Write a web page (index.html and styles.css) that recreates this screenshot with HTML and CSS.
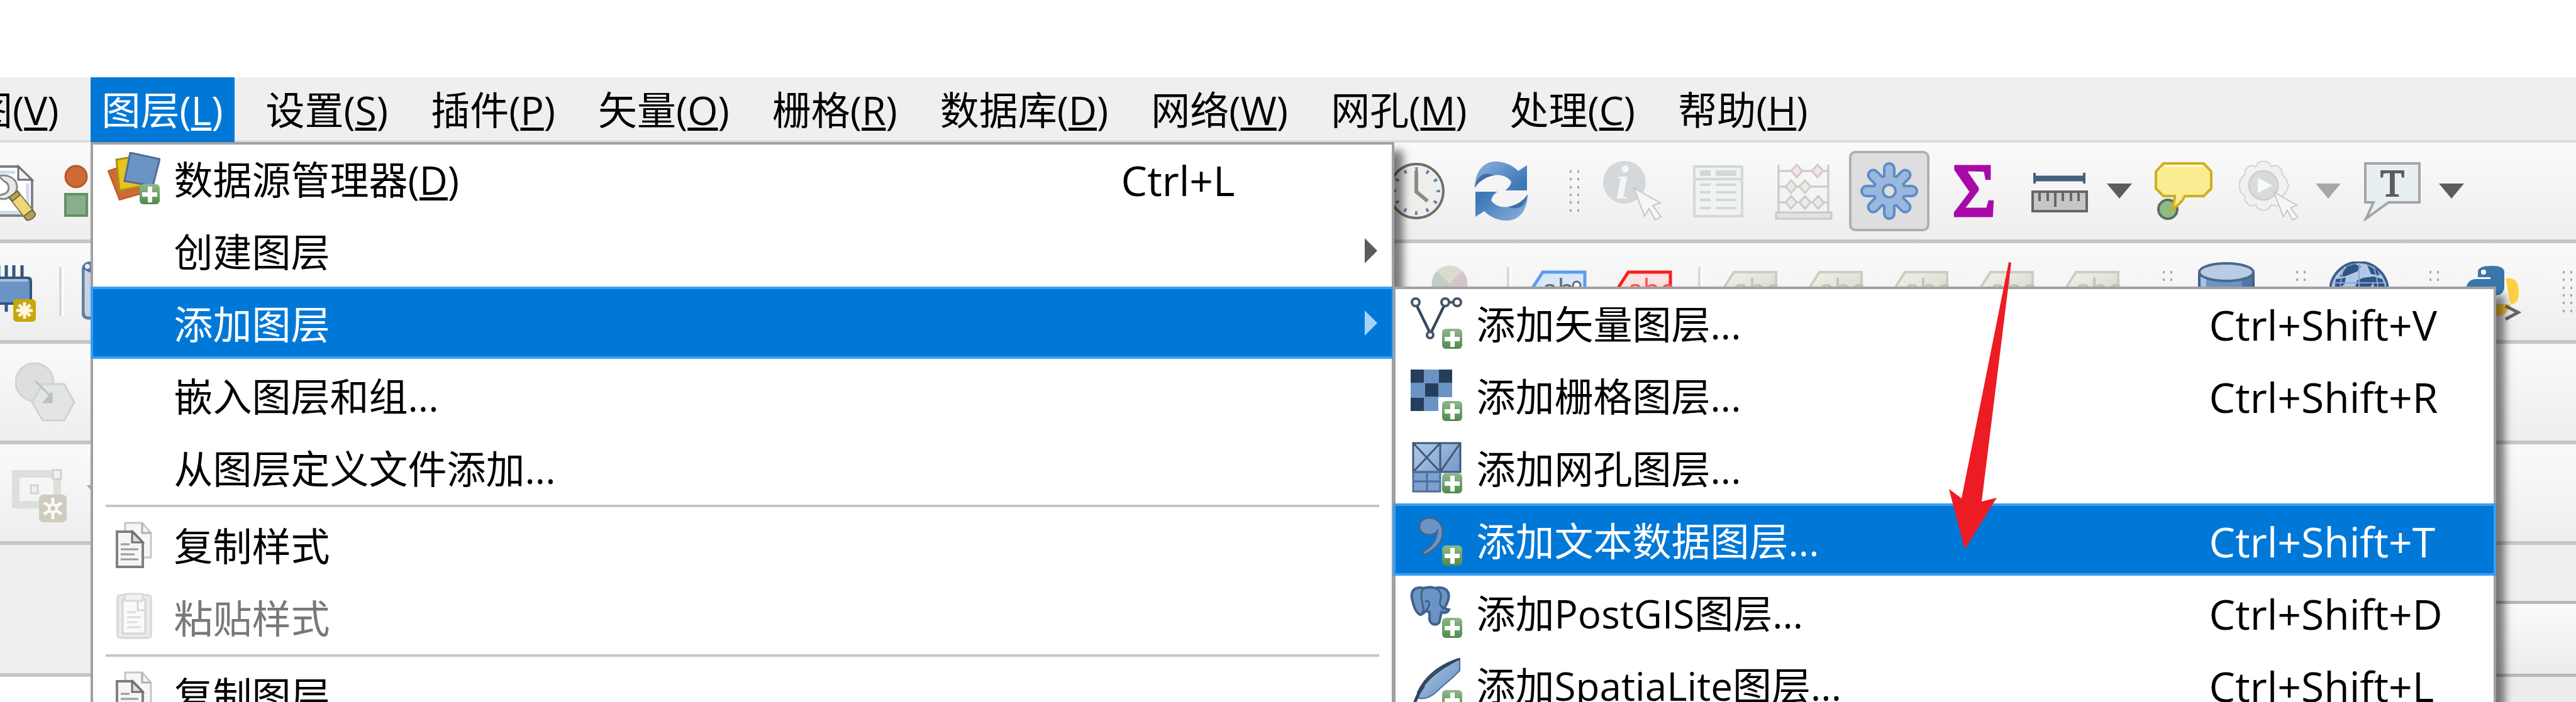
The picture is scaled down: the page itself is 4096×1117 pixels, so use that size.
FILE: index.html
```html
<!DOCTYPE html>
<html lang="zh-CN">
<head>
<meta charset="utf-8">
<title>QGIS</title>
<link rel="stylesheet" href="styles.css">
</head>
<body>
<svg class="defs" aria-hidden="true">
  <defs>
    <linearGradient id="g-plus" x1="0" y1="0" x2="0" y2="1"><stop offset="0" stop-color="#8fb98c"/><stop offset="1" stop-color="#4f8a4c"/></linearGradient>
    <linearGradient id="g-arrow" x1="0" y1="0" x2="1" y2="0.6"><stop offset="0" stop-color="#8fb4de"/><stop offset="1" stop-color="#3d78b8"/></linearGradient>
    <linearGradient id="g-blue" x1="0" y1="0" x2="1" y2="1"><stop offset="0" stop-color="#b6cbe6"/><stop offset="1" stop-color="#5f8cc0"/></linearGradient>
    <linearGradient id="g-tag" x1="0" y1="0" x2="1" y2="1"><stop offset="0" stop-color="#f2f2ea"/><stop offset="1" stop-color="#d4d4c8"/></linearGradient>
    <symbol id="plus" viewBox="0 0 34 34">
      <rect x="1" y="1" width="32" height="32" rx="6" fill="url(#g-plus)"/>
      <path d="M14 5h7v9h8v7h-8v9h-7v-9H5v-7h9z" fill="#fff"/>
    </symbol>
    <symbol id="grip" viewBox="0 0 18 68">
      <g fill="#a8a8a8"><path d="M1 1h3v4H1zM1 13h3v4H1zM1 26h3v4H1zM1 38h3v4H1zM1 50h3v4H1zM1 63h3v4H1zM13 1h3v4h-3zM13 13h3v4h-3zM13 26h3v4h-3zM13 38h3v4h-3zM13 50h3v4h-3zM13 63h3v4h-3z"/></g>
    </symbol>
    <symbol id="tag" viewBox="0 0 96 96">
      <path d="M5 42 21 17h67v54H21z" fill="url(#g-tag)" stroke="#cfccbf" stroke-width="4"/>
      <text x="20" y="60" font-size="44" fill="#c2c2b8">abc</text>
    </symbol>
    <symbol id="copy" viewBox="0 0 84 84">
      <path d="M28 7h27l14 16v39H28z" fill="#f6f6f6" stroke="#c6c6c6" stroke-width="3"/>
      <path d="M55 7v16h14" fill="none" stroke="#b0b0b0" stroke-width="3"/>
      <path d="M15 21h25l16 17v39H15z" fill="#f6f6f6" stroke="#808080" stroke-width="4"/>
      <path d="M39 21v17h17z" fill="#ddd" stroke="#707070" stroke-width="3"/>
      <path d="M21 41h14M21 49h28M21 57h22M21 65h28" stroke="#9a9a9a" stroke-width="3"/>
    </symbol>
    <symbol id="cursor" viewBox="0 0 48 56">
      <path d="M2 2 44 26 32 30 45 48 36 53 26 35 19 47z" fill="#f6f6f6" stroke="#c4c4c4" stroke-width="2"/>
    </symbol>
  </defs>
</svg>

<div class="window">
  <header class="menubar">
    <ul class="menubar-list">
      <li><button class="menubar-item">视图(<u>V</u>)</button></li>
      <li class="open"><button class="menubar-item active">图层(<u>L</u>)</button>
        <ul class="menu menu-layer">
          <li><button class="item">
            <svg class="item-icon" viewBox="0 0 84 84"><path d="M1 30 36 18 54 66 19 76z" fill="#d06a34" stroke="#b85a2c" stroke-width="2"/><path d="M14 12 50 6 56 54 19 61z" fill="#e8c31c" stroke="#a89016" stroke-width="3"/><path d="M36 1 83 11 72 54 27 46z" fill="#6b94c4" stroke="#4d6f98" stroke-width="3"/><use href="#plus" x="50" y="50" width="34" height="34"/></svg>
            <span class="label">数据源管理器(<u>D</u>)</span><span class="shortcut">Ctrl+L</span></button></li>
          <li><button class="item"><span class="item-icon"></span><span class="label">创建图层</span><svg class="chevron" viewBox="0 0 20 40"><path d="M0 0 20 20 0 40z"/></svg></button></li>
          <li class="open"><button class="item active"><span class="item-icon"></span><span class="label">添加图层</span><svg class="chevron" viewBox="0 0 20 40"><path d="M0 0 20 20 0 40z"/></svg></button>
            <ul class="menu menu-add">
              <li><button class="item">
                <svg class="item-icon" viewBox="0 0 84 84"><g fill="none" stroke="#44566c" stroke-width="4"><path d="M11 15 31 56M54 15 34 56M61 9h8"/><path d="M11 15 31 56M54 15 34 56" stroke="#33475c"/><circle cx="9" cy="9" r="6"/><circle cx="56" cy="9" r="6"/><circle cx="75" cy="9" r="6"/><circle cx="32" cy="61" r="5"/></g><use href="#plus" x="50" y="50" width="34" height="34"/></svg>
                <span class="label">添加矢量图层...</span><span class="shortcut">Ctrl+Shift+V</span></button></li>
              <li><button class="item">
                <svg class="item-icon" viewBox="0 0 84 84"><path d="M1 1h66v44H45v22H1z" fill="#6b94c4"/><path d="M1 1h21v21H1zM46 1h21v21H46zM24 23h21v21H24zM1 46h21v21H1z" fill="#263e5e"/><use href="#plus" x="50" y="50" width="34" height="34"/></svg>
                <span class="label">添加栅格图层...</span><span class="shortcut">Ctrl+Shift+R</span></button></li>
              <li><button class="item">
                <svg class="item-icon" viewBox="0 0 84 84"><path d="M5 3h76v46H49v32H5z" fill="url(#g-blue)"/><path d="M5 49h44v32H5z" fill="#7da1cf"/><path d="M5 3h75v46H5zM48 3v46M5 3l43 46M48 3 5 49M80 3 48 49" fill="none" stroke="#3f5878" stroke-width="3"/><path d="M5 49h43v31H5zM27 49v31M5 64h43" fill="none" stroke="#4c6f9e" stroke-width="3"/><use href="#plus" x="50" y="50" width="34" height="34"/></svg>
                <span class="label">添加网孔图层...</span><span class="shortcut"></span></button></li>
              <li><button class="item active">
                <svg class="item-icon" viewBox="0 0 84 84"><path d="M31 7C43 7 52 16 52 30 52 48 38 59 23 66L20 61C32 54 42 45 43 29 40 33 35 34 30 34 21 34 15 29 15 21 15 12 22 7 31 7z" fill="#6b94c4" stroke="#44648e" stroke-width="3"/><use href="#plus" x="50" y="50" width="34" height="34"/></svg>
                <span class="label">添加文本数据图层...</span><span class="shortcut">Ctrl+Shift+T</span></button></li>
              <li><button class="item">
                <svg class="item-icon" viewBox="0 0 84 84"><g fill="#6b94c4" stroke="#3f628c" stroke-width="4"><path d="M22 4C8 0 1 8 3 20 5 32 10 44 16 46 20 46 22 43 25 40L31 42 31 54C33 64 46 64 47 56L50 42C56 44 60 42 62 38L54 36C60 28 63 18 61 12 58 2 46 2 40 4 34 1 28 2 22 4z"/><path d="M21 5C16 12 18 22 20 30 22 36 22 38 19 44M43 5C50 10 50 18 48 24 46 30 50 34 54 37M24 26C28 22 32 26 30 32 29 36 27 38 25 40" fill="none" stroke-width="3"/></g><use href="#plus" x="50" y="50" width="34" height="34"/></svg>
                <span class="label">添加PostGIS图层...</span><span class="shortcut">Ctrl+Shift+D</span></button></li>
              <li><button class="item">
                <svg class="item-icon" viewBox="0 0 84 84"><path d="M79 1C50 10 22 30 12 58L14 64C24 66 34 62 44 52 54 42 66 34 79 20z" fill="url(#g-blue)" stroke="#4d6f98" stroke-width="2"/><path d="M79 1C50 10 24 28 12 56L20 46C34 26 54 14 79 1z" fill="#6b94c4" stroke="#33475c" stroke-width="3"/><path d="M22 44C14 54 8 66 4 84" fill="none" stroke="#33475c" stroke-width="5"/><use href="#plus" x="50" y="50" width="34" height="34"/></svg>
                <span class="label">添加SpatiaLite图层...</span><span class="shortcut">Ctrl+Shift+L</span></button></li>
            </ul>
          </li>
          <li><button class="item"><span class="item-icon"></span><span class="label">嵌入图层和组...</span></button></li>
          <li><button class="item"><span class="item-icon"></span><span class="label">从图层定义文件添加...</span></button></li>
          <li class="separator"></li>
          <li><button class="item"><svg class="item-icon"><use href="#copy"/></svg><span class="label">复制样式</span></button></li>
          <li><button class="item" disabled>
            <svg class="item-icon" viewBox="0 0 84 84"><rect x="16" y="7" width="53" height="68" rx="5" fill="#ecebe8" stroke="#dedcd8" stroke-width="4"/><path d="M24 14h36v54H24z" fill="#fafafa" stroke="#d6d6d6" stroke-width="3"/><path d="M28 5h28v11H28z" fill="#f2f2f2" stroke="#dadada" stroke-width="3"/><path d="M48 17v14h12" fill="none" stroke="#d6d6d6" stroke-width="3"/><path d="M31 34h14M31 42h22M31 50h16M31 58h22" stroke="#dcdcdc" stroke-width="3"/></svg>
            <span class="label">粘贴样式</span></button></li>
          <li class="separator"></li>
          <li><button class="item"><svg class="item-icon"><use href="#copy"/></svg><span class="label">复制图层</span></button></li>
        </ul>
      </li>
      <li><button class="menubar-item">设置(<u>S</u>)</button></li>
      <li><button class="menubar-item">插件(<u>P</u>)</button></li>
      <li><button class="menubar-item">矢量(<u>O</u>)</button></li>
      <li><button class="menubar-item">栅格(<u>R</u>)</button></li>
      <li><button class="menubar-item">数据库(<u>D</u>)</button></li>
      <li><button class="menubar-item">网络(<u>W</u>)</button></li>
      <li><button class="menubar-item">网孔(<u>M</u>)</button></li>
      <li><button class="menubar-item">处理(<u>C</u>)</button></li>
      <li><button class="menubar-item">帮助(<u>H</u>)</button></li>
    </ul>
  </header>

  <div class="toolbar">
    <div class="group-left scrolled">
      <button class="tool" aria-label="样式面板"><svg viewBox="0 0 96 96"><path d="M6 9h61l22 22v56H6z" fill="#fff" stroke="#808080" stroke-width="4"/><path d="M12 18h50M82 36v46H12" fill="none" stroke="#cdd9f6" stroke-width="5"/><path d="M67 9v21h22z" fill="#f2f2f2" stroke="#707070" stroke-width="3"/><path d="M36 24C50 20 64 28 65 40 66 48 60 54 56 56L48 60C42 62 36 60 34 56L46 52C54 48 54 36 44 32z" fill="#e8eaea" stroke="#8a8a8a" stroke-width="3"/><path d="M52 58 66 48 93 82C95 88 86 96 80 94z" fill="#ecd879" stroke="#8a7c40" stroke-width="2"/><path d="M52 58 66 48 70 54 58 64zM80 94 76 88 89 78 94 84C95 88 87 96 80 94z" fill="#b0a25a" stroke="#746a3c" stroke-width="2"/></svg></button>
      <button class="tool" aria-label="样式"><svg viewBox="0 0 96 96"><circle cx="23" cy="25" r="17" fill="#d06a34" stroke="#b4562a" stroke-width="3"/><path d="M6 53h34v34H6z" fill="#8aad8b" stroke="#619361" stroke-width="4"/></svg></button>
    </div>
    <div class="group-right">
      <button class="tool" aria-label="时态控制器"><svg viewBox="0 0 96 96"><circle cx="48" cy="48" r="43" fill="#eeeeec" stroke="#6e6e6a" stroke-width="4"/><circle cx="48" cy="48" r="35" fill="none" stroke="#5c86b8" stroke-width="6" stroke-dasharray="4 14.33" stroke-dashoffset="2"/><path d="M48 16v33l18 15" fill="none" stroke="#8c8c86" stroke-width="6"/></svg></button>
      <button class="tool" aria-label="刷新"><svg viewBox="0 0 96 96"><g id="half"><path d="M5 43C5 18 18 1 38 1 54 1 66 8 74 16L88 7V47H53C60 42 62 38 63 33 58 26 48 21 36 23 22 25 10 34 5 43z" fill="url(#g-arrow)"/><path d="M5 43C8 24 20 16 36 23 22 25 10 34 5 43z" fill="#3f6ea8"/></g><use href="#half" transform="rotate(180 47 48)"/></svg></button>
      <span class="grip"><svg><use href="#grip"/></svg></span>
      <button class="tool" aria-label="识别要素" disabled><svg viewBox="0 0 96 96"><circle cx="35" cy="34" r="34" fill="#d5d8db"/><text x="21" y="60" font-size="76" font-weight="700" font-style="italic" class="serif" fill="#f4f4f4">i</text><use href="#cursor" x="48" y="41" width="48" height="56"/></svg></button>
      <button class="tool" aria-label="打开属性表" disabled><svg viewBox="0 0 96 96"><path d="M10 9h76v79H10zM10 29h76" fill="#f1f2f2" stroke="#d3d8dc" stroke-width="4"/><path d="M19 15h17v9H19zM44 15h33v9H44z" fill="#d5d8db"/><path d="M19 38h17M44 38h33M19 50h17M44 50h33M19 62h17M44 62h33M19 75h17M44 75h33" stroke="#d3d7da" stroke-width="4"/></svg></button>
      <button class="tool" aria-label="字段计算器" disabled><svg viewBox="0 0 96 96"><g fill="none" stroke="#c8c8c8" stroke-width="3"><path d="M8 6v76M87 6v76M8 16h79M8 41h79M8 66h79"/><path d="M4 82h88v10H4z" fill="#e2e2e2"/><path d="m37 6 9 10-9 10-9-10zM70 6l9 10-9 10-9-10z" fill="#f1e4e4" stroke="#d8c8c8"/><path d="m28 31 9 10-9 10-9-10zM50 31l9 10-9 10-9-10z" fill="#e8ece6" stroke="#ccd0c8"/><path d="m28 56 9 10-9 10-9-10zM50 56l9 10-9 10-9-10zM71 56l9 10-9 10-9-10z" fill="#e8ecec" stroke="#c8cccc"/></g></svg></button>
      <button class="tool pressed" aria-label="工具箱"><svg viewBox="0 0 96 96"><g id="teeth" fill="#9bb8dc" stroke="#5b8ccb" stroke-width="6"><rect x="41" y="5" width="14" height="86" rx="7"/><rect x="41" y="5" width="14" height="86" rx="7" transform="rotate(45 48 48)"/><rect x="41" y="5" width="14" height="86" rx="7" transform="rotate(90 48 48)"/><rect x="41" y="5" width="14" height="86" rx="7" transform="rotate(135 48 48)"/><circle cx="48" cy="48" r="24"/></g><g fill="#9bb8dc"><rect x="42" y="6" width="12" height="84" rx="6"/><rect x="42" y="6" width="12" height="84" rx="6" transform="rotate(45 48 48)"/><rect x="42" y="6" width="12" height="84" rx="6" transform="rotate(90 48 48)"/><rect x="42" y="6" width="12" height="84" rx="6" transform="rotate(135 48 48)"/><circle cx="48" cy="48" r="23"/></g><circle cx="48" cy="48" r="10" fill="#dedede" stroke="#5b8ccb" stroke-width="4"/></svg></button>
      <button class="tool" aria-label="统计"><svg viewBox="0 0 96 96"><text x="47" y="87" font-size="118" text-anchor="middle" class="serif" fill="#a80aa8" stroke="#a80aa8" stroke-width="5">Σ</text></svg></button>
      <button class="tool split" aria-label="测量"><svg viewBox="0 0 96 96"><path d="M7 19v17M86 19v17" stroke="#44607c" stroke-width="4"/><path d="M7 28h79" stroke="#44607c" stroke-width="9"/><path d="M4 49h86v31H4z" fill="#c6c6c6" stroke="#666" stroke-width="4"/><path d="M15 50v14M28 50v14M40 50v23M52 50v14M65 50v14M77 50v14" stroke="#666" stroke-width="4"/></svg><svg class="drop" viewBox="0 0 40 24"><path d="M0 0h40L20 24z"/></svg></button>
      <button class="tool" aria-label="地图提示"><svg viewBox="0 0 96 96"><circle cx="23" cy="77" r="15" fill="#8cbd87" stroke="#5e6e5c" stroke-width="4"/><path d="M16 4H80L92 17V44L80 56H50C46 66 38 72 28 78 32 70 34 64 34 56H16L4 44V17z" fill="#f9ec91" stroke="#cfae22" stroke-width="4"/><path d="M18 8h60" stroke="#fff8d0" stroke-width="4"/></svg></button>
      <button class="tool split" aria-label="运行要素动作" disabled><svg viewBox="0 0 96 96"><g fill="#f1f1f1" stroke="#d2d2d2" stroke-width="2"><path d="M39 0 48 3 51 9 60 7 68 14 69 22 75 28 79 39 75 50 69 56 68 64 60 72 51 70 48 76 39 79 30 76 27 70 18 72 10 64 9 56 3 50 0 39 3 28 9 22 10 14 18 7 27 9 30 3z"/></g><circle cx="39" cy="39" r="23" fill="#d8dbdd" stroke="#cdd0d2" stroke-width="3"/><path d="M30 27 53 39 30 51z" fill="#fafafa"/><use href="#cursor" x="54" y="48" width="42" height="49"/></svg><svg class="drop" viewBox="0 0 40 24"><path d="M0 0h40L20 24z"/></svg></button>
      <button class="tool split" aria-label="文本注记"><svg viewBox="0 0 96 96"><path d="M5 4h86v62H42L6 92 18 66H5z" fill="#e8eff3" stroke="#a2a6a8" stroke-width="4"/><text x="48" y="56" font-size="62" text-anchor="middle" class="serif" fill="#5c5c5c" stroke="#5c5c5c" stroke-width="2">T</text></svg><svg class="drop" viewBox="0 0 40 24"><path d="M0 0h40L20 24z"/></svg></button>
    </div>
  </div>

  <div class="toolbar wide">
    <div class="group-left scrolled">
      <button class="tool" aria-label="新建临时图层"><svg viewBox="0 0 96 96"><path d="M48 6v20M60 6v20M73 6v20M48 66v14M36 6v20" stroke="#33557e" stroke-width="5"/><path d="M-8 26h90q5 0 5 5v36H-8z" fill="#6b94c4" stroke="#33557e" stroke-width="4"/><path d="M0 30h82" stroke="#a6c0e0" stroke-width="4"/><rect x="59" y="60" width="36" height="36" rx="6" fill="#c8a70c"/><path d="M77 65v26M64 78h26M68 69l18 18M86 69 68 87" stroke="#fdf8dc" stroke-width="5"/></svg></button>
      <span class="divider"></span>
      <button class="tool" aria-label="编辑"><svg viewBox="0 0 96 96"><path d="M2 12Q4 2 16 2h60v88H10Q2 90 2 80z" fill="#c6d3e6" stroke="#62809f" stroke-width="5"/><path d="M2 12Q4 2 16 2h20v28L14 18z" fill="#4b6c94"/><circle cx="9" cy="8" r="4" fill="#e8eef6"/></svg></button>
    </div>
    <div class="group-right">
      <button class="tool inset" aria-label="图表" disabled><svg viewBox="0 0 96 96"><path d="M41 35 21 15A28 28 0 0 1 61 15z" fill="#dcdacb"/><path d="M41 35 21 15A28 28 0 0 0 41 63z" fill="#c2cec6"/><path d="M41 35 61 15A28 28 0 0 1 41 63z" fill="#d4c6c8"/></svg></button>
      <span class="divider"></span>
      <button class="tool" aria-label="标注"><svg viewBox="0 0 96 96"><path d="M5 42 21 17h67v54H21z" fill="#d8e8fc" stroke="#5b9cf0" stroke-width="5"/><text x="20" y="60" font-size="44" fill="#6a6a6a">ab</text><circle cx="75" cy="38" r="6" fill="#fff" stroke="#6a6a6a" stroke-width="3"/></svg></button>
      <button class="tool" aria-label="固定标注"><svg viewBox="0 0 96 96"><path d="M5 42 21 17h67v54H21z" fill="#fde2e2" stroke="#fa1e1e" stroke-width="5"/><text x="20" y="60" font-size="44" fill="#fa5050">abc</text></svg></button>
      <span class="divider"></span>
      <button class="tool" aria-label="标注一" disabled><svg><use href="#tag"/></svg></button>
      <button class="tool" aria-label="标注二" disabled><svg><use href="#tag"/></svg></button>
      <button class="tool" aria-label="标注三" disabled><svg><use href="#tag"/></svg></button>
      <button class="tool" aria-label="标注四" disabled><svg><use href="#tag"/></svg></button>
      <button class="tool" aria-label="标注五" disabled><svg><use href="#tag"/></svg></button>
      <span class="grip"><svg><use href="#grip"/></svg></span>
      <button class="tool" aria-label="数据库管理器"><svg viewBox="0 0 96 96"><path d="M5 18v64a43 12 0 0 0 86 0V18z" fill="#6b94c4" stroke="#3f5f86" stroke-width="4"/><path d="M7 22h9v60H7z" fill="#a9c2e2"/><path d="M73 22h16v60H73z" fill="#4f76a6"/><ellipse cx="48" cy="17" rx="43" ry="14" fill="#b8cce4" stroke="#4a688c" stroke-width="4"/></svg></button>
      <span class="grip"><svg><use href="#grip"/></svg></span>
      <button class="tool" aria-label="网络目录"><svg viewBox="0 0 96 96"><circle cx="47" cy="47" r="46" fill="#b0c8e6" stroke="#3f5f8a" stroke-width="4"/><path d="M28 8 40 4 50 8 44 16 34 20 24 24 16 24zM10 28 26 26 24 36 14 44 8 46zM54 26 70 24 84 28 90 44 72 48 70 34 62 44 56 56 40 44 44 30zM60 6 76 14 80 22 66 20z" fill="#2f5584"/><path d="M4 34h86M47 2v88M24 8Q10 46 24 86M70 8Q84 46 70 86" fill="none" stroke="#8aa8d0" stroke-width="2"/></svg></button>
      <span class="grip"><svg><use href="#grip"/></svg></span>
      <button class="tool" aria-label="Python 控制台"><svg viewBox="0 0 96 96"><path d="M68 27h8q13 2 13 22 0 20-14 19H50L30 88q40 4 44-16l2-4z" fill="#ffd040"/><path d="M24 27V16Q25 7 46 7q19 0 20 9v26q-2 12-14 12H28Q18 56 17 68H8Q-2 28 22 28h22v-3H24z" fill="#3a76ac"/><circle cx="33" cy="17" r="4" fill="#fff"/><path d="M68 71 88 81 68 92" fill="none" stroke="#666" stroke-width="5"/></svg></button>
      <span class="grip"><svg><use href="#grip"/></svg></span>
    </div>
  </div>

  <div class="toolbar">
    <div class="group-left indented">
      <button class="tool" aria-label="形状工具" disabled><svg viewBox="0 0 96 96"><circle cx="31" cy="32" r="30" fill="#dcdfdc" stroke="#d0d4d0" stroke-width="3"/><path d="M44 35h34l16 29-16 29H44L27 64z" fill="#e2e4e6" stroke="#cfd2d4" stroke-width="3"/><path d="M32 30 58 56M58 50v14H46z" fill="#bcc0bc" stroke="#bcc0bc" stroke-width="3"/></svg></button>
    </div>
    <div class="group-right"></div>
  </div>

  <div class="toolbar">
    <div class="group-left">
      <button class="tool split" aria-label="新建网孔" disabled><svg viewBox="0 0 96 96"><path d="M9 18h66v49H9z" fill="none" stroke="#dce0dc" stroke-width="12"/><path d="M68 12h13v14H68zM33 36h11v13H33z" fill="#f0f0f0" stroke="#d0d4d0" stroke-width="3"/><rect x="46" y="51" width="44" height="44" rx="7" fill="#cfccbf"/><path d="M68 56v34M54 64l28 18M82 64 54 82" stroke="#fafafa" stroke-width="5"/><circle cx="68" cy="73" r="6" fill="#cfccbf" stroke="#fafafa" stroke-width="4"/></svg><svg class="drop" viewBox="0 0 40 24"><path d="M0 0h40L20 24z"/></svg></button>
    </div>
    <div class="group-right"></div>
  </div>

  <main class="workspace">
    <section class="dock-left"></section>
    <section class="dock-right"><div class="dock-title"></div><div class="dock-bar"></div></section>
  </main>

  <svg class="pointer" viewBox="0 0 80 460" aria-hidden="true"><path d="M96 1 100 2 53 382 77 376 26 458 1 362 21 377z" fill="#ed1c24"/></svg>
</div>
</body>
</html>
```
FILE: styles.css
```css
* {
  box-sizing: border-box;
}

body {
  margin: 0;
  background: #fff;
  color: #000;
  font-family: "Open Sans", "Noto Sans CJK SC", sans-serif;
  font-size: 62px;
  line-height: 80px;
}

ul {
  list-style: none;
  margin: 0;
  padding: 0;
}

button {
  border: 0;
  padding: 0;
  background: none;
  color: inherit;
  font: inherit;
  text-align: left;
  white-space: nowrap;
}

u {
  text-decoration-thickness: 5px;
  text-underline-offset: 4px;
  text-decoration-skip-ink: none;
}

.defs {
  position: absolute;
  width: 0;
  height: 0;
}

.serif {
  font-family: "Liberation Serif", serif;
}

.window {
  position: relative;
  display: flex;
  flex-direction: column;
  height: 100vh;
  padding-top: 123px;
  overflow: hidden;
}

/* menu bar */

.menubar {
  flex: none;
  background: #efefef;
  border-bottom: 4px solid #dcdcdc;
}

.menubar-list {
  display: flex;
  gap: 32px;
  height: 100px;
  margin-left: -122px;
}

.menubar-list > li {
  position: relative;
  flex: none;
}

.menubar-item {
  height: 104px;
  padding: 0 18px;
}

.menubar-item.active {
  background: #0078d7;
  color: #fff;
}

/* popup menus */

.menu {
  position: absolute;
  z-index: 2;
  background: #fff;
  box-shadow: inset 0 4px #a0a0a0, inset 4px 0 #a0a0a0, inset -4px 0 #a0a0a0, 14px 14px 12px rgba(0, 0, 0, 0.5);
}

.menu > li {
  position: relative;
}

.menu-layer {
  top: 103px;
  left: 0;
  width: 2073px;
}

.menu-add {
  top: 0;
  left: calc(100% - 2px);
  width: 1754px;
}

.item {
  display: flex;
  align-items: center;
  width: 100%;
  height: 115px;
  padding-left: 27px;
}

.item.active {
  padding-left: 23px;
  border: 4px solid #3a9ff0;
  background: #0078d7;
  color: #fff;
}

.item:disabled {
  color: #787878;
}

.item-icon {
  flex: none;
  width: 84px;
  height: 84px;
  margin-right: 22px;
}

.label,
.shortcut {
  padding-top: 4px;
}

.label {
  flex: 1;
}

.shortcut {
  width: 434px;
  font-size: 66px;
}

.menu-add .shortcut {
  width: 456px;
}

.menu-add .active .shortcut {
  width: 452px;
}

.chevron {
  width: 20px;
  height: 40px;
  margin-right: 27px;
  fill: #5c5c5c;
}

.active .chevron {
  margin-right: 23px;
  fill: #a8d2f4;
}

.separator {
  height: 8px;
  margin: 0 24px;
  border-top: 2px solid #fff;
  border-bottom: 2px solid #fff;
  background: #c6c6c6;
}

/* toolbars */

.toolbar {
  display: flex;
  flex: none;
  height: 160px;
  border-bottom: 6px solid #c6c6c6;
  background: linear-gradient(#fafafa, #eee);
}

.group-left,
.group-right {
  display: flex;
  align-items: center;
  gap: 8px;
}

.group-left {
  flex: 0 0 2188px;
}

.group-left.scrolled {
  margin-left: -54px;
  flex-basis: 2242px;
}

.group-left.indented {
  padding-left: 8px;
}

.tool {
  display: flex;
  flex: none;
  align-items: center;
  width: 128px;
  height: 128px;
  padding: 0 16px;
  border-radius: 10px;
}

.tool svg {
  flex: none;
  width: 96px;
  height: 96px;
}

.tool.split {
  width: 188px;
}

.tool .drop {
  width: 40px;
  height: 24px;
  margin-left: 26px;
  fill: #5c5c5c;
}

.tool:disabled .drop {
  fill: #a8a8a8;
}

.tool.pressed {
  padding: 0 12px;
  border: 4px solid #b0b0b0;
  background: #dedede;
}

.tool.inset {
  margin-left: 60px;
}

.grip {
  flex: none;
  width: 64px;
  height: 68px;
  padding-left: 35px;
}

.wide .grip {
  width: 68px;
  padding-left: 38px;
}

.grip svg {
  display: block;
  width: 18px;
  height: 68px;
}

.divider {
  flex: none;
  width: 24px;
  height: 78px;
  background: linear-gradient(90deg, transparent 12px, #d8d8d8 12px, #d8d8d8 16px, #fff 16px, #fff 19px, transparent 19px);
}

/* docks */

.workspace {
  display: flex;
  flex: 1;
}

.dock-left {
  flex: 0 0 2188px;
  height: 210px;
  border-bottom: 6px solid #c6c6c6;
  background: #efefef;
}

.dock-right {
  flex: 1;
  background: #ececec;
}

.dock-title {
  height: 94px;
  border-bottom: 5px solid #b8b8b8;
  background: #efefef;
}

.dock-bar {
  height: 116px;
  border-bottom: 5px solid #b8b8b8;
  background: linear-gradient(#fafafa, #ececec);
}

/* annotation arrow drawn over the menus */

.pointer {
  position: absolute;
  z-index: 3;
  top: 416px;
  left: 3098px;
  width: 80px;
  height: 460px;
  overflow: visible;
}
```
